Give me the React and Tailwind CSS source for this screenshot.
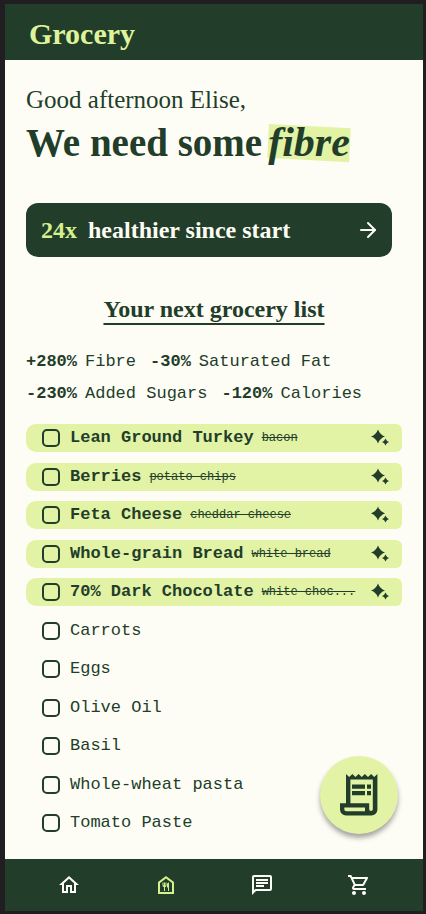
import {
  MdOutlineHome,
  MdOutlineFoodBank,
  MdOutlineChat,
  MdOutlineShoppingCart,
} from "react-icons/md";
import { ArrowRight } from "lucide-react";

const stats = [
  [
    { change: "+280%", label: "Fibre" },
    { change: "-30%", label: "Saturated Fat" },
  ],
  [
    { change: "-230%", label: "Added Sugars" },
    { change: "-120%", label: "Calories" },
  ],
];

const items = [
  { name: "Lean Ground Turkey", replaces: "bacon" },
  { name: "Berries", replaces: "potato chips" },
  { name: "Feta Cheese", replaces: "cheddar cheese" },
  { name: "Whole-grain Bread", replaces: "white bread" },
  { name: "70% Dark Chocolate", replaces: "white choc..." },
  { name: "Carrots" },
  { name: "Eggs" },
  { name: "Olive Oil" },
  { name: "Basil" },
  { name: "Whole-wheat pasta" },
  { name: "Tomato Paste" },
];

function Sparkles() {
  return (
    <svg viewBox="0 0 18 18" className="size-[18px] shrink-0" fill="currentColor" aria-hidden="true">
      <path d="M7 0.5 Q8.8 5.7 14 7.5 Q8.8 9.3 7 14.5 Q5.2 9.3 0 7.5 Q5.2 5.7 7 0.5Z" />
      <path d="M14.5 9.5 Q15.4 12.1 18 13 Q15.4 13.9 14.5 16.5 Q13.6 13.9 11 13 Q13.6 12.1 14.5 9.5Z" />
    </svg>
  );
}

function ReceiptIcon() {
  return (
    <svg viewBox="0 0 38 42" className="h-[42px] w-[38px]" fill="currentColor" aria-hidden="true">
      <path
        fillRule="evenodd"
        d="M6 0L9.2 3L12.4 0L15.5 3L18.6 0L21.7 3L24.9 0L28 3L31.1 0L34.2 3L37.4 0V35.4A6 6 0 0 1 31.4 41.4H6A6 6 0 0 1 0 35.4V29.3H6ZM10.4 5.6V29.3H29.2V35.2A1.8 1.8 0 0 0 32.8 35.2V5.6ZM4.3 33.4V35.2A2 2 0 0 0 6.3 37.2H25V33.4Z"
      />
      <path d="M12 10.6H25V14.8H12ZM27 10.6H31V14.8H27ZM12 17H25V21.2H12ZM27 17H31V21.2H27Z" />
    </svg>
  );
}

function GroceryItem({ item, id }) {
  const swapped = Boolean(item.replaces);
  return (
    <li
      className={
        swapped
          ? "flex h-7 items-center rounded-l-[10px] rounded-r-md bg-[#e2f3a5] pr-[13px] pl-4"
          : "flex h-7 items-center pr-[13px] pl-4"
      }
    >
      <input
        id={id}
        type="checkbox"
        className="size-[18px] shrink-0 appearance-none rounded-[5px] border-2 border-[#223e2a] checked:bg-[#223e2a]"
      />
      <label
        htmlFor={id}
        className="flex min-w-0 flex-1 items-center gap-2 pl-[10px] text-[17px] leading-6 whitespace-nowrap"
      >
        <span className={swapped ? "font-bold" : ""}>{item.name}</span>
        {swapped && <s className="text-xs">{item.replaces}</s>}
      </label>
      {swapped && <Sparkles />}
    </li>
  );
}

function NavLink({ label, active, children }) {
  return (
    <a
      href="#"
      aria-label={label}
      className={
        active
          ? "flex items-center justify-center text-[#d5f08c]"
          : "flex items-center justify-center text-[#fefdf5]"
      }
    >
      {children}
    </a>
  );
}

export default function App() {
  return (
    <div className="flex min-h-screen flex-col bg-[#201e20] pt-1 pr-[3px] pb-[3px] pl-[5px] font-['Liberation_Serif',serif] text-[#223e2a]">
      <header className="flex h-14 items-center bg-[#223e2a] px-6 pt-1">
        <span className="text-[30px] leading-10 font-black text-[#dff39c]">Grocery</span>
      </header>

      <main className="relative flex flex-1 flex-col bg-[#fefdf5] px-[21px] pt-6 pb-[22px]">
        <p className="text-[25px] leading-8">Good afternoon Elise,</p>
        <h1 className="flex items-baseline gap-[6px] text-[39px] leading-[52px] font-bold whitespace-nowrap">
          We need some
          <em className="relative isolate text-[42px]">
            <span className="absolute inset-x-0 top-[10px] -z-10 h-[34px] rotate-3 bg-[#e2f3a5]" />
            fibre
          </em>
        </h1>

        <button
          type="button"
          className="mt-[34px] mr-[10px] flex h-[54px] items-center gap-[11px] rounded-xl bg-[#223e2a] pr-3 pl-[15px] text-2xl font-bold whitespace-nowrap text-[#fefdf5]"
        >
          <span className="text-[#d5f08c]">24x</span>
          <span>healthier since start</span>
          <ArrowRight className="ml-auto size-6" strokeWidth={2} />
        </button>

        <h2 className="mt-9 text-center text-2xl leading-8 font-bold underline decoration-2 underline-offset-[6px]">
          Your next grocery list
        </h2>

        <div className="mt-[21px] flex flex-col font-['Liberation_Mono',monospace] text-[17px] leading-8 whitespace-nowrap">
          {stats.map((row, i) => (
            <div key={i} className="flex gap-[14px]">
              {row.map((stat) => (
                <p key={stat.label} className="flex gap-2">
                  <strong>{stat.change}</strong>
                  {stat.label}
                </p>
              ))}
            </div>
          ))}
        </div>

        <ul className="mt-[14px] flex flex-1 flex-col justify-between gap-2 font-['Liberation_Mono',monospace]">
          {items.map((item, i) => (
            <GroceryItem key={item.name} item={item} id={`item-${i}`} />
          ))}
        </ul>

        <button
          type="button"
          aria-label="Receipts"
          className="absolute right-[25px] bottom-[25px] flex size-[78px] items-center justify-center rounded-full bg-[#e2f3a5] shadow-[0_4px_5px_rgba(0,0,0,0.35)]"
        >
          <ReceiptIcon />
        </button>
      </main>

      <nav className="grid h-[52px] grid-cols-4 bg-[#223e2a] px-4">
        <NavLink label="Home">
          <MdOutlineHome className="size-6" />
        </NavLink>
        <NavLink label="Groceries" active>
          <MdOutlineFoodBank className="size-6" />
        </NavLink>
        <NavLink label="Messages">
          <MdOutlineChat className="size-6" />
        </NavLink>
        <NavLink label="Cart">
          <MdOutlineShoppingCart className="size-6" />
        </NavLink>
      </nav>
    </div>
  );
}
